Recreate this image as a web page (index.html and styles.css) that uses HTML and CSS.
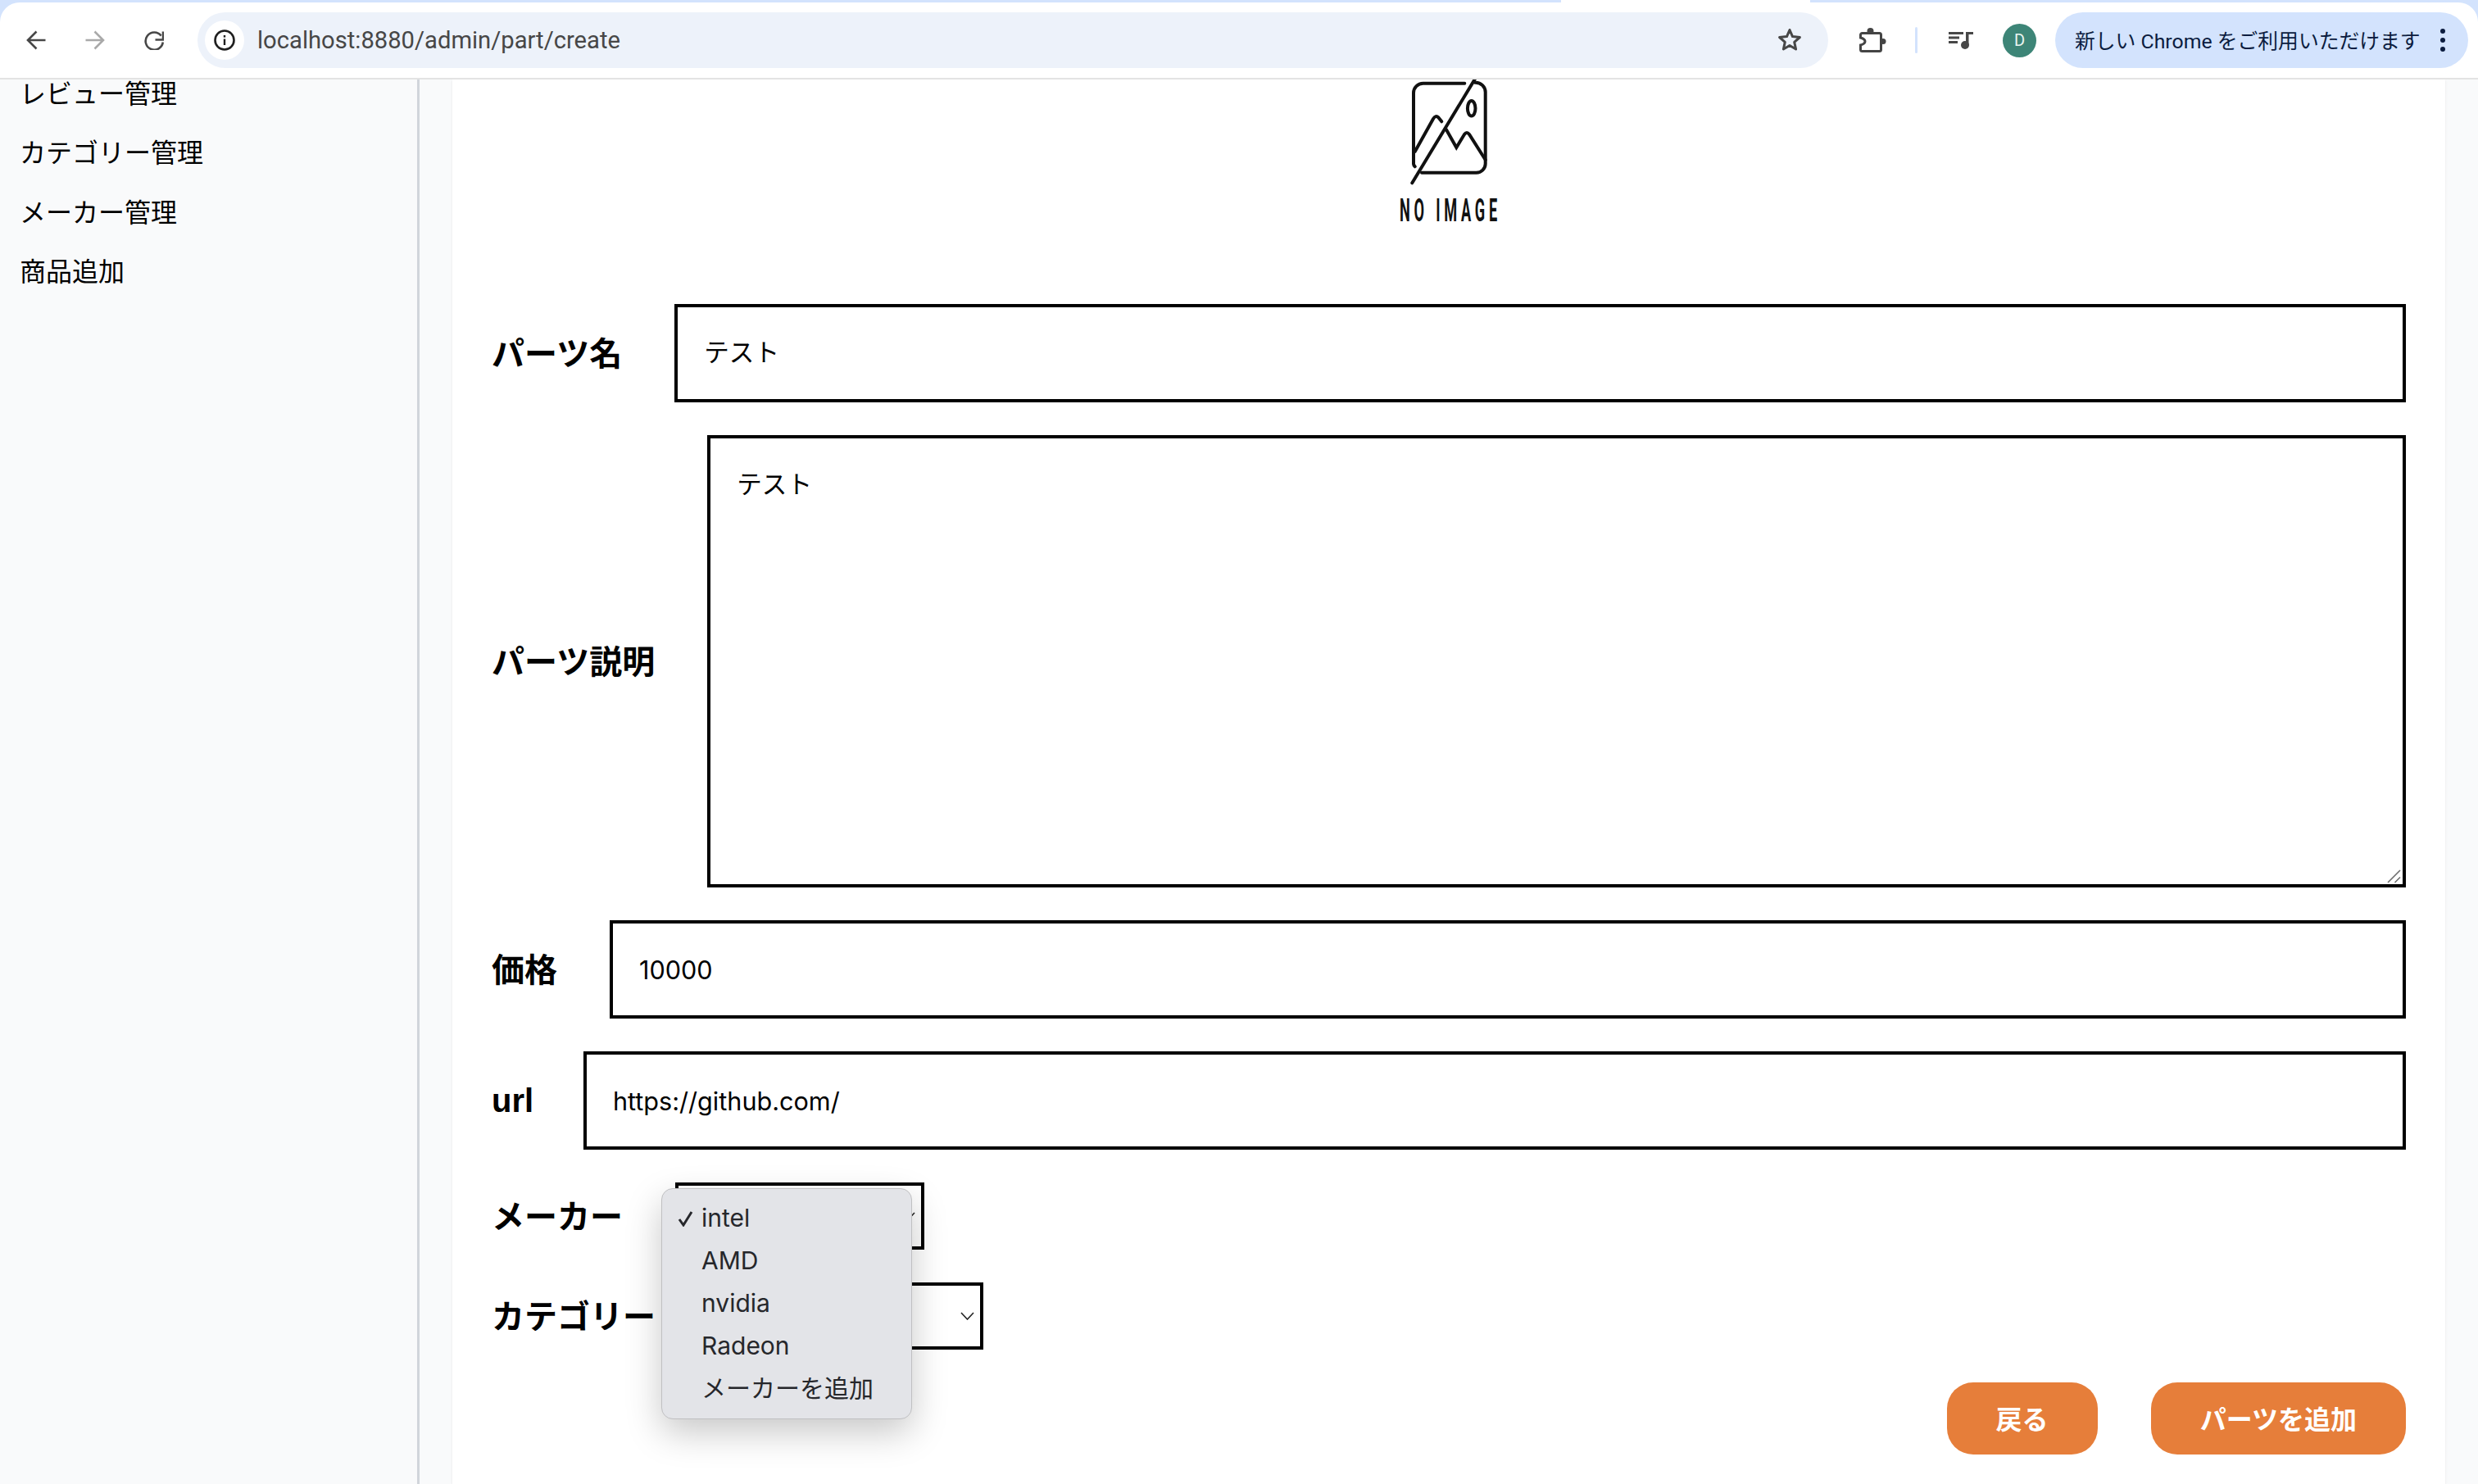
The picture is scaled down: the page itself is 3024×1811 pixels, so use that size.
FILE: index.html
```html
<!DOCTYPE html>
<html lang="ja">
<head>
<meta charset="UTF-8" />
<title>パーツ追加</title>
<link rel="stylesheet" href="styles.css">
</head>
<body>

<!-- browser frame -->
<div class="strip">
  <span class="strip-blue strip-left"></span>
  <span class="strip-gap"></span>
  <span class="strip-blue strip-right"></span>
</div>
<header class="toolbar">
  <svg class="nav-icon" viewBox="0 0 24 24"><path d="M23.5 12H2M12.5 1.5 2 12l10.5 10.5"/></svg>
  <svg class="nav-icon nav-off" viewBox="0 0 24 24"><path d="M.5 12H22M11.5 1.5 22 12 11.5 22.5"/></svg>
  <svg class="nav-icon" viewBox="0 0 24 24"><path d="M20.6 6.6A10.6 10.6 0 1 0 22.8 14.5"/><path d="M23 1.5V11.5H13.5"/></svg>
  <div class="omnibox">
    <span class="site-info">
      <svg width="26" height="26" viewBox="0 0 26 26"><circle class="info-ring" cx="13" cy="13" r="11.5"/><rect class="info-mark" x="11.8" y="11.5" width="2.4" height="7.5"/><rect class="info-mark" x="11.8" y="7" width="2.4" height="2.6"/></svg>
    </span>
    <span class="url">localhost:8880/admin/part/create</span>
    <svg class="star" width="30" height="30" viewBox="0 0 30 30"><polygon points="15,2.5 18.5,10.6 27.4,11.5 20.7,17.4 22.6,26 15,21.5 7.4,26 9.3,17.4 2.6,11.5 11.5,10.6"/></svg>
  </div>
  <svg class="puzzle" width="33" height="31" viewBox="0 0 33 31"><path d="M3.5 6.5H24.5a2 2 0 0 1 2 2V26.5a2 2 0 0 1-2 2H3.5a2 2 0 0 1-2-2V21C5 20 7 18.5 7 16.5S5 13 1.5 12V8.5a2 2 0 0 1 2-2Z"/><circle cx="13.5" cy="4" r="4"/><circle cx="29" cy="16.5" r="3.5"/></svg>
  <span class="toolbar-sep"></span>
  <svg class="media" width="30" height="22" viewBox="0 0 30 22"><rect y="1" width="18" height="3"/><rect y="6.5" width="13" height="3"/><rect y="12" width="11" height="3"/><rect x="21" y="1" width="9" height="3"/><rect x="21" y="1" width="3.5" height="16"/><circle cx="20" cy="17" r="5"/></svg>
  <span class="avatar">D</span>
  <div class="update-chip">
    <span class="update-text">新しい Chrome をご利用いただけます</span>
    <span class="dots"><i></i><i></i><i></i></span>
  </div>
</header>

<!-- admin page -->
<div class="page">
  <nav class="sidebar">
    <ul>
      <li>レビュー管理</li>
      <li>カテゴリー管理</li>
      <li>メーカー管理</li>
      <li>商品追加</li>
    </ul>
  </nav>

  <main class="content">
    <div class="card">
      <svg class="no-image" width="440" height="190" viewBox="-140 0 440 190">
        <g class="no-image-lines">
          <path d="M99.3 4.7H48.7A11.7 11.7 0 0 0 37 16.3V103A5 5 0 0 0 38.7 106.3"/>
          <path d="M112 3.7A12 12 0 0 1 124.7 16.3V103A11 11 0 0 1 113.7 113.7H47"/>
          <path d="M35.3 126.3 112.5 -1.5"/>
          <path d="M38.7 88 61 48Q64 43 67.5 46.5L71.3 51.3"/>
          <path d="M77 61.3 89.3 83 99 67Q102 63 105 67L124.7 98"/>
          <ellipse cx="107.7" cy="35.3" rx="4.8" ry="9.3"/>
        </g>
        <text class="no-image-text" x="20" y="173" textLength="124" lengthAdjust="spacingAndGlyphs">NO IMAGE</text>
      </svg>

      <form class="part-form">
        <div class="form-row">
          <label class="form-label">パーツ名</label>
          <input class="form-input input-ja" type="text" value="テスト">
        </div>
        <div class="form-row">
          <label class="form-label">パーツ説明</label>
          <div class="textarea-wrap">
            <textarea class="form-input form-textarea">テスト</textarea>
            <svg class="grip" width="17" height="17" viewBox="0 0 17 17"><path d="M1 16 16 1M9.500 16 16 9.500"/></svg>
          </div>
        </div>
        <div class="form-row">
          <label class="form-label">価格</label>
          <input class="form-input" type="text" value="10000">
        </div>
        <div class="form-row">
          <label class="form-label label-url">url</label>
          <input class="form-input" type="text" value="https://github.com/">
        </div>
        <div class="form-row">
          <label class="form-label">メーカー</label>
          <div class="select select-maker">
            <svg class="chevron" width="17" height="10" viewBox="0 0 17 10"><path d="M1 1l7.500 8L16 1"/></svg>
            <ul class="select-menu">
              <li><svg class="check" width="20" height="20" viewBox="0 0 20 20"><path d="M2 11l5 7L17 2"/></svg>intel</li>
              <li>AMD</li>
              <li>nvidia</li>
              <li>Radeon</li>
              <li>メーカーを追加</li>
            </ul>
          </div>
        </div>
        <div class="form-row">
          <label class="form-label">カテゴリー</label>
          <div class="select select-category">
            <svg class="chevron" width="17" height="10" viewBox="0 0 17 10"><path d="M1 1l7.500 8L16 1"/></svg>
          </div>
        </div>
        <div class="form-actions">
          <button class="btn" type="button">戻る</button>
          <button class="btn" type="button">パーツを追加</button>
        </div>
      </form>
    </div>
  </main>
</div>

</body>
</html>
```

FILE: styles.css
```css
* {
  box-sizing: border-box;
}
body {
  margin: 0;
  height: 1811px;
  overflow: hidden;
  display: flex;
  flex-direction: column;
  background: #d3e3fd;
  color: #000;
  font-family: "Liberation Sans", "Noto Sans CJK JP", sans-serif;
}

/* browser frame */
.strip {
  display: flex;
  height: 3px;
  flex: none;
}
.strip-blue {
  background: #d3e3fd;
}
.strip-left {
  width: 1905px;
  border-bottom-right-radius: 8px;
}
.strip-right {
  flex: 1;
  border-bottom-left-radius: 8px;
}
.strip-gap {
  width: 304px;
  background: #fff;
}
.toolbar {
  flex: none;
  height: 94px;
  display: flex;
  align-items: center;
  padding: 0 12px 0 32px;
  background: #fff;
  border-top-left-radius: 24px;
  border-top-right-radius: 24px;
  border-bottom: 2px solid #e3e3e3;
}
.nav-icon {
  flex: none;
  width: 24px;
  height: 24px;
  margin-right: 48px;
  fill: none;
  stroke: #474747;
  stroke-width: 2.6;
}
.nav-off {
  stroke: #a9a9a9;
}
.omnibox {
  flex: 1;
  height: 68px;
  margin-left: -7px;
  display: flex;
  align-items: center;
  padding: 0 32px 0 9px;
  background: #edf2fa;
  border-radius: 34px;
}
.site-info {
  width: 48px;
  height: 48px;
  display: flex;
  align-items: center;
  justify-content: center;
  background: #fff;
  border-radius: 24px;
}
.info-ring {
  fill: none;
  stroke: #1f1f1f;
  stroke-width: 2.6;
}
.info-mark {
  fill: #1f1f1f;
}
.url {
  flex: 1;
  margin-left: 16px;
  font-family: Roboto, sans-serif;
  font-size: 29.2px;
  color: #474747;
}
.star {
  fill: none;
  stroke: #474747;
  stroke-width: 3;
  stroke-linejoin: round;
}
.puzzle {
  flex: none;
  margin-left: 38px;
  fill: #444;
}
.puzzle path {
  fill: none;
  stroke: #444;
  stroke-width: 3;
}
.toolbar-sep {
  flex: none;
  width: 3px;
  height: 32px;
  margin-left: 35px;
  background: #d3e3fd;
  border-radius: 2px;
}
.media {
  flex: none;
  margin-left: 38px;
  fill: #474747;
}
.avatar {
  flex: none;
  width: 41px;
  height: 41px;
  margin-left: 36px;
  display: flex;
  align-items: center;
  justify-content: center;
  border-radius: 50%;
  background: #3d8577;
  color: #e8f5f1;
  font-family: Roboto, sans-serif;
  font-size: 20px;
}
.update-chip {
  flex: none;
  width: 504px;
  height: 68px;
  margin-left: 23px;
  padding-left: 24px;
  display: flex;
  align-items: center;
  background: #d3e3fd;
  border-radius: 34px;
  color: #0b1c3f;
  font-family: Roboto, "Noto Sans CJK JP", sans-serif;
  font-size: 24.8px;
  white-space: nowrap;
}
.update-text {
  padding-bottom: 3px;
}
.dots {
  margin-left: 24px;
  display: flex;
  flex-direction: column;
  gap: 5px;
}
.dots i {
  width: 6px;
  height: 6px;
  border-radius: 50%;
  background: #0b1c3f;
}

/* admin page */
.page {
  flex: 1;
  min-height: 0;
  display: flex;
  overflow: hidden;
  background: #f9fafb;
}
.sidebar {
  flex: none;
  width: 512px;
  border-right: 3px solid #d1d5db;
}
.sidebar ul {
  list-style: none;
  margin: -6px 0 0;
  padding: 0 0 0 24px;
}
.sidebar li {
  font-size: 32px;
  line-height: 48px;
  margin-bottom: 24.3px;
}
.content {
  flex: 1;
  padding: 0 40px;
}
.card {
  padding: 0 48px;
  height: 100%;
  background: #fff;
  box-shadow: 0 1px 3px rgba(0, 0, 0, 0.08);
}
.no-image {
  display: block;
  margin: 0 auto 84px;
}
.no-image-lines {
  fill: none;
  stroke: #111;
  stroke-width: 4;
  stroke-linecap: round;
}
.no-image-text {
  font-family: Roboto, sans-serif;
  font-size: 38px;
  font-weight: 700;
  letter-spacing: 10px;
  fill: #111;
}
.form-row {
  display: flex;
  align-items: center;
  margin-bottom: 40px;
}
.form-label {
  flex: none;
  margin-right: 64px;
  padding-bottom: 4px;
  font-size: 40px;
  font-weight: bold;
}
.label-url {
  width: 48px;
  padding-bottom: 0;
}
.form-input {
  flex: 1;
  min-width: 0;
  height: 120px;
  padding: 32px;
  border: 4px solid #000;
  border-radius: 0;
  background: #fff;
  color: #000;
  font-family: Inter, "Noto Sans CJK JP", sans-serif;
  font-size: 30.6px;
  line-height: 48px;
  outline: none;
}
.input-ja {
  padding-top: 29px;
  padding-bottom: 35px;
}
.textarea-wrap {
  position: relative;
  flex: 1;
  display: flex;
}
.form-textarea {
  height: 552px;
  resize: none;
}
.grip {
  position: absolute;
  right: 6px;
  bottom: 5px;
  fill: none;
  stroke: #6e6e6e;
  stroke-width: 1.6;
}
.select {
  position: relative;
  height: 82px;
  display: flex;
  align-items: center;
  justify-content: flex-end;
  padding-right: 7px;
  border: 4px solid #000;
  background: #fff;
}
.select-maker {
  width: 304px;
}
.select-category {
  width: 336px;
}
.chevron {
  fill: none;
  stroke: #222;
  stroke-width: 1.6;
}
.form-actions {
  display: flex;
  justify-content: flex-end;
  gap: 65px;
}
.btn {
  height: 88px;
  padding: 0 60px 3px;
  border: none;
  border-radius: 32px;
  background: #e67e3a;
  color: #fff;
  font-family: inherit;
  font-size: 32px;
  font-weight: bold;
}

/* open select popup */
.select-menu {
  position: absolute;
  top: 3px;
  left: -21px;
  z-index: 5;
  width: 306px;
  height: 282px;
  margin: 0;
  padding: 9px 0 0 48px;
  list-style: none;
  background: #e3e4e8;
  border: 1px solid #c0c0c2;
  border-radius: 14px;
  box-shadow: 0 16px 44px rgba(0, 0, 0, 0.22);
  color: #26272b;
  font-family: Inter, "Noto Sans CJK JP", sans-serif;
  font-size: 30px;
}
.select-menu li {
  position: relative;
  height: 52px;
  line-height: 52px;
}
.check {
  position: absolute;
  left: -29px;
  top: 17px;
  fill: none;
  stroke: #26272b;
  stroke-width: 3;
}
```
